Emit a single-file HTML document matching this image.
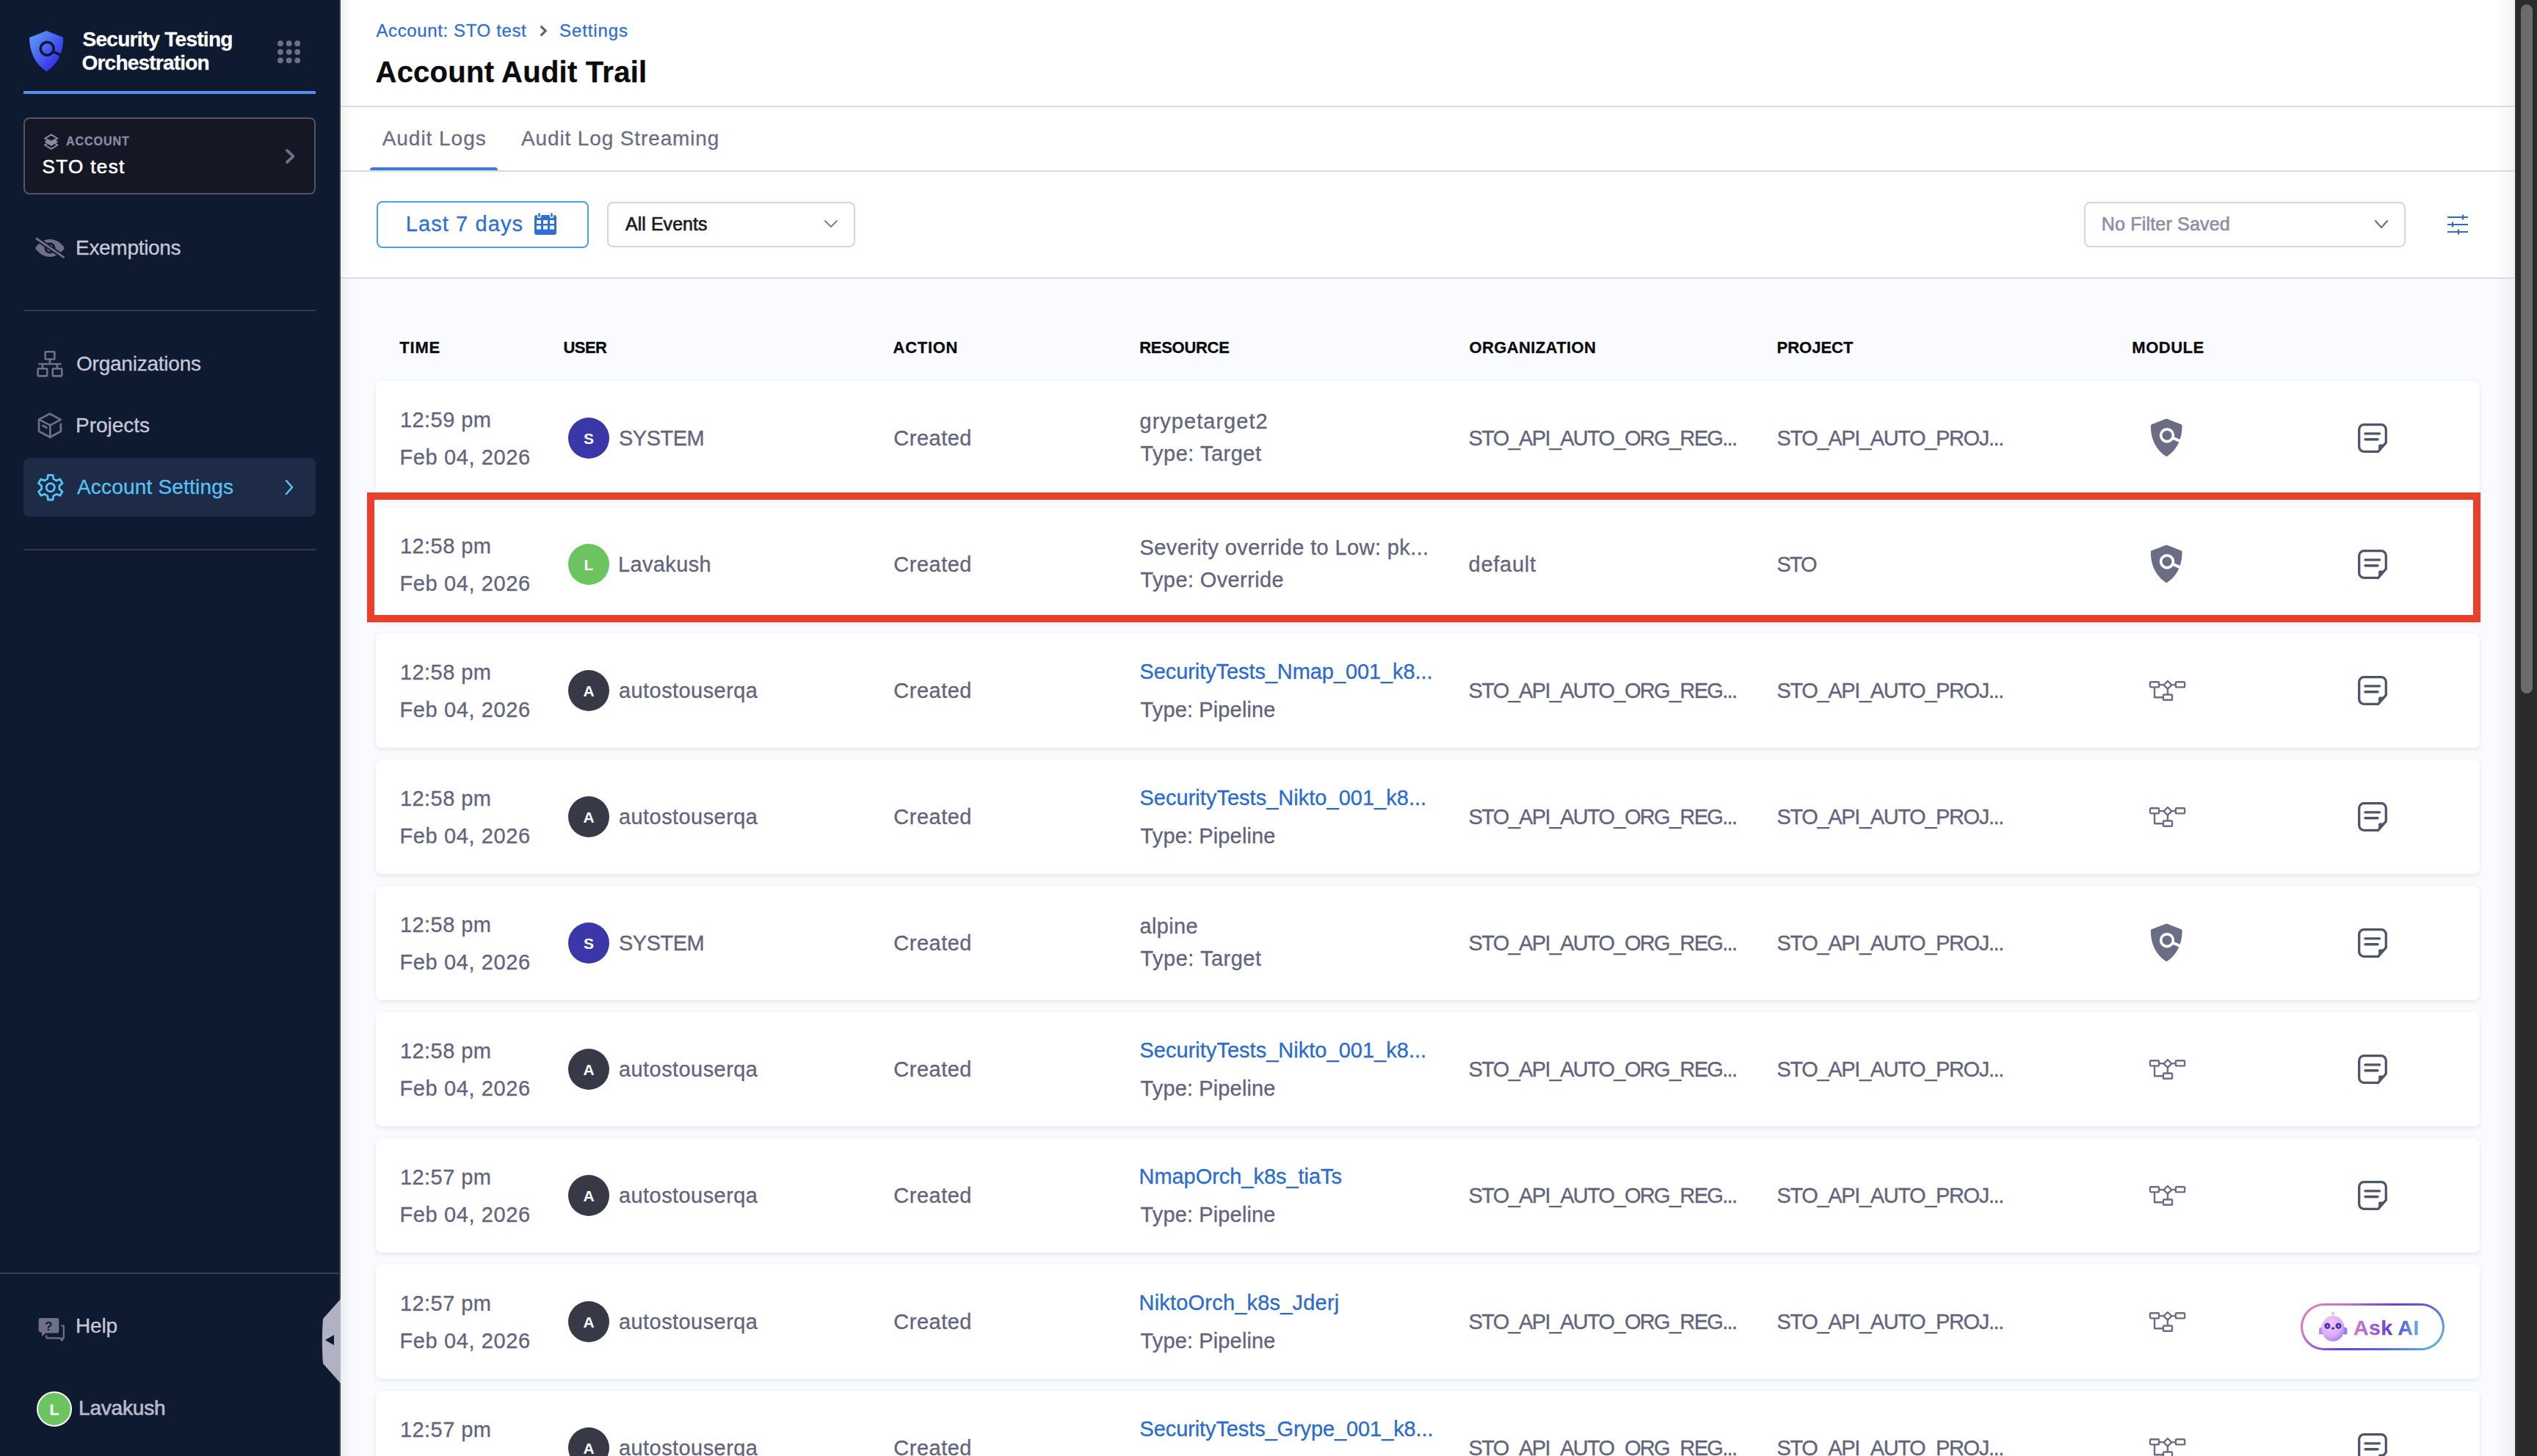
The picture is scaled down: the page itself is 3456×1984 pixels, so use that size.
<!DOCTYPE html>
<html><head><meta charset="utf-8"><title>Account Audit Trail</title>
<style>
html,body{margin:0;padding:0;}
body{width:3456px;height:1984px;overflow:hidden;position:relative;background:#fafbfd;font-family:"Liberation Sans", sans-serif;}
.t{position:absolute;white-space:nowrap;-webkit-text-stroke-width:0.3px;}
.r{position:absolute;display:block;}
.askai{border-radius:32px;border:3px solid transparent;box-sizing:border-box;
background:linear-gradient(#fff,#fff) padding-box,linear-gradient(140deg,#e27fbf 0%,#c873c6 22%,#6a3ed8 47%,#5a66dc 68%,#5fc6df 100%) border-box;}
</style></head><body>
<div class="r" style="left:0.00px;top:0.00px;width:462.00px;height:1984.00px;background:#0e1a30;"></div>
<div class="r" style="left:462.00px;top:0.00px;width:2.00px;height:1984.00px;background:#3a3d4c;"></div>
<svg class="r" style="left:39.90px;top:42.20px;" width="46.50" height="55.50" viewBox="0 0 46.5 55.5"><defs><linearGradient id="lg" x1="0" y1="0" x2="1" y2="1"><stop offset="0" stop-color="#62a4ff"/><stop offset="1" stop-color="#2a14e2"/></linearGradient></defs><path d="M23.3 0 L46.3 9.2 C46.5 29 39 45 23.3 55.5 C7.6 45 0.2 29 0 9.2 Z" fill="url(#lg)"/><circle cx="24.2" cy="24.3" r="8.9" fill="none" stroke="#0e1a30" stroke-width="3.5"/><path d="M32.5 28.3 L47 35" stroke="#0e1a30" stroke-width="3.5"/></svg>
<div class="t" style="left:112.50px;top:39.80px;font-size:28px;line-height:28px;color:#ffffff;font-weight:700;letter-spacing:-0.723px;">Security Testing</div>
<div class="t" style="left:111.50px;top:72.10px;font-size:28px;line-height:28px;color:#ffffff;font-weight:700;letter-spacing:-0.791px;">Orchestration</div>
<svg class="r" style="left:374.00px;top:51.00px;" width="40.00" height="40.00" viewBox="0 0 40 40"><g fill="#6e7089"><circle cx="8.00" cy="8.20" r="3.9"/><circle cx="19.70" cy="8.20" r="3.9"/><circle cx="31.20" cy="8.20" r="3.9"/><circle cx="8.00" cy="19.80" r="3.9"/><circle cx="19.70" cy="19.80" r="3.9"/><circle cx="31.20" cy="19.80" r="3.9"/><circle cx="8.00" cy="31.30" r="3.9"/><circle cx="19.70" cy="31.30" r="3.9"/><circle cx="31.20" cy="31.30" r="3.9"/></g></svg>
<div class="r" style="left:32.00px;top:124.00px;width:398.00px;height:4.00px;background:#5a8ff0;"></div>
<div class="r" style="left:32.00px;top:160.00px;width:398.00px;height:105.00px;background:#151824;border:2px solid #555464;border-radius:8px;box-sizing:border-box;"></div>
<svg class="r" style="left:54.00px;top:178.00px;" width="32.00" height="32.00" viewBox="0 0 32 32"><g fill="none" stroke="#8a8ca3" stroke-width="1.9" stroke-linejoin="round"><path d="M15.8 5.4 L24.4 10.7 L15.7 14.6 L7.1 10.7 Z"/><path d="M10.2 17.9 L7 19.5 L15.7 24.9 L24.6 19.5 L21.3 17.9"/></g><path d="M6.4 15.1 L9.9 12.8 L15.7 15.6 L21.8 12.8 L25.4 15.2 L15.7 20.9 Z" fill="#8a8ca3"/></svg>
<div class="t" style="left:90.00px;top:185.46px;font-size:16px;line-height:16px;color:#8a8ca3;font-weight:700;letter-spacing:0.964px;">ACCOUNT</div>
<div class="t" style="left:57.60px;top:213.59px;font-size:26px;line-height:26px;color:#ffffff;font-weight:400;letter-spacing:1.359px;-webkit-text-stroke:0.6px #fff;">STO test</div>
<svg class="r" style="left:385.00px;top:200.00px;" width="20.00" height="26.00" viewBox="0 0 20 26"><path d="M6 5 L14.5 13 L6 21" fill="none" stroke="#6e7089" stroke-width="3.8" stroke-linecap="round" stroke-linejoin="round"/></svg>
<svg class="r" style="left:40.00px;top:310.00px;" width="60.00" height="60.00" viewBox="0 0 60 60"><path d="M8 28 C12 21.5 19.5 16 28 16 C36.5 16 44 21.5 48 28 C44 34.5 36.5 40 28 40 C19.5 40 12 34.5 8 28 Z" fill="#6e7089"/><circle cx="28" cy="28" r="6.1" fill="none" stroke="#0e1a30" stroke-width="2.8"/><path d="M9.9 15.2 L46.6 40.4" stroke="#0e1a30" stroke-width="6.6" stroke-linecap="round"/><path d="M9.9 15.2 L46.6 40.4" stroke="#6e7089" stroke-width="2.9" stroke-linecap="round"/></svg>
<div class="t" style="left:103.00px;top:323.90px;font-size:28px;line-height:28px;color:#c6c8d8;font-weight:400;letter-spacing:-0.299px;">Exemptions</div>
<div class="r" style="left:32.00px;top:422.00px;width:398.00px;height:2.00px;background:#34384a;"></div>
<svg class="r" style="left:40.00px;top:470.00px;" width="60.00" height="60.00" viewBox="0 0 60 60"><g fill="none" stroke="#6e7089" stroke-width="2.6" stroke-linejoin="round"><rect x="21.7" y="9.3" width="12.6" height="10.2" rx="0.8"/><rect x="11.6" y="32.2" width="12.6" height="10.2" rx="0.8"/><rect x="31.8" y="32.2" width="12.4" height="10.2" rx="0.8"/><path d="M28 19.5 V26 M13.2 26 H42.6 M17.9 26 V32.2 M37.9 26 V32.2" stroke-linecap="round"/></g></svg>
<div class="t" style="left:104.00px;top:482.30px;font-size:28px;line-height:28px;color:#c6c8d8;font-weight:400;letter-spacing:-0.230px;">Organizations</div>
<svg class="r" style="left:40.00px;top:555.00px;" width="60.00" height="50.00" viewBox="0 0 60 50"><g fill="none" stroke="#6e7089" stroke-width="2.7" stroke-linejoin="round" stroke-linecap="round"><path d="M13 16.6 L27.8 8.7 L42.8 16.9 L28.3 24.4 Z"/><path d="M13 16.6 V32.7 L28.3 40.8 V24.4"/><path d="M28.3 40.8 L42.8 32.7 V22.8"/><path d="M18.3 25 L23.5 27.8"/></g></svg>
<div class="t" style="left:103.00px;top:566.30px;font-size:28px;line-height:28px;color:#c6c8d8;font-weight:400;letter-spacing:-0.021px;">Projects</div>
<div class="r" style="left:32.00px;top:624.00px;width:398.00px;height:80.00px;background:#1e2b46;border-radius:8px;"></div>
<svg class="r" style="left:49.00px;top:644.00px;" width="40.00" height="40.00" viewBox="0 0 40 40"><g fill="none" stroke="#56c3f6" stroke-width="2.8" stroke-linejoin="round"><path d="M16.5 3.3 H23 L23.8 8.6 L27.8 10.9 L32.8 9 L36 14.5 L31.9 17.9 V22.5 L36 25.8 L32.8 31.3 L27.8 29.4 L23.8 31.7 L23 37 H16.5 L15.7 31.7 L11.7 29.4 L6.7 31.3 L3.5 25.8 L7.6 22.5 V17.9 L3.5 14.5 L6.7 9 L11.7 10.9 L15.7 8.6 Z"/><circle cx="19.75" cy="20.2" r="5.6"/></g></svg>
<div class="t" style="left:105.00px;top:650.30px;font-size:28px;line-height:28px;color:#56c3f6;font-weight:400;letter-spacing:0.192px;">Account Settings</div>
<svg class="r" style="left:384.00px;top:650.00px;" width="20.00" height="28.00" viewBox="0 0 20 28"><path d="M6 5 L14 14 L6 23" fill="none" stroke="#56c3f6" stroke-width="2.6" stroke-linecap="round" stroke-linejoin="round"/></svg>
<div class="r" style="left:32.00px;top:748.00px;width:398.00px;height:2.00px;background:#34384a;"></div>
<div class="r" style="left:0.00px;top:1734.00px;width:462.00px;height:2.00px;background:#3b3e4e;"></div>
<svg class="r" style="left:44.00px;top:1788.00px;" width="50.00" height="50.00" viewBox="0 0 50 50"><path d="M11 8 H33.8 A2.5 2.5 0 0 1 36.3 10.5 V26 A2.5 2.5 0 0 1 33.8 28.5 H18.5 L13 33 V28 Q9 27 8.6 25 V10.5 A2.5 2.5 0 0 1 11 8 Z" fill="#6e7089"/><text x="22.3" y="24.6" font-family="Liberation Sans" font-weight="700" font-size="17" fill="#0e1a30" text-anchor="middle">?</text><path d="M39.2 18.5 H42.8 V35.4 H41 V38.6 L37.6 35.4 H20.8 Q19.2 35.4 19.2 33.8 V31.5" fill="none" stroke="#6e7089" stroke-width="2.2" stroke-linejoin="round"/></svg>
<div class="t" style="left:103.00px;top:1793.30px;font-size:28px;line-height:28px;color:#c6c8d8;font-weight:400;letter-spacing:-0.171px;">Help</div>
<svg class="r" style="left:438.00px;top:1770.00px;" width="26.00" height="115.00" viewBox="0 0 26 115"><path d="M26 0 L26 115 L2 88 C0.5 70 0.5 45 2 27 Z" fill="#b0b2c4"/><path d="M5 56 L17 49 V63 Z" fill="#0e1a30"/></svg>
<div class="r" style="left:49.70px;top:1895.60px;width:48.20px;height:48.20px;background:#6cc461;border:2px solid #ffffff;border-radius:50%;box-sizing:border-box;"></div>
<div class="t" style="left:67.50px;top:1909.82px;font-size:21px;line-height:21px;color:#ffffff;font-weight:700;">L</div>
<div class="t" style="left:107.00px;top:1905.30px;font-size:28px;line-height:28px;color:#b8bacb;font-weight:400;letter-spacing:-0.184px;-webkit-text-stroke:0.7px #b8bacb;">Lavakush</div>
<div class="r" style="left:464.00px;top:0.00px;width:2961.00px;height:379.00px;background:#ffffff;"></div>
<div class="r" style="left:464.00px;top:379.00px;width:2962.00px;height:1605.00px;background:#fafbfe;"></div>
<div class="r" style="left:464.00px;top:0.00px;width:18.00px;height:1984.00px;background:linear-gradient(90deg,rgba(0,0,0,0.05),rgba(0,0,0,0));"></div>
<div class="r" style="left:3400.00px;top:0.00px;width:26.00px;height:1984.00px;background:linear-gradient(90deg,rgba(0,0,30,0),rgba(0,0,30,0.045));"></div>
<div class="t" style="left:512.50px;top:29.68px;font-size:24px;line-height:24px;color:#2f6fcd;font-weight:400;letter-spacing:0.616px;">Account: STO test</div>
<svg class="r" style="left:730.00px;top:34.00px;" width="18.00" height="20.00" viewBox="0 0 18 20"><path d="M6.6 1.6 L13.2 8.1 L6.6 14.6" fill="none" stroke="#596373" stroke-width="3.1" stroke-linejoin="miter"/></svg>
<div class="t" style="left:762.00px;top:29.68px;font-size:24px;line-height:24px;color:#2f6fcd;font-weight:400;letter-spacing:0.897px;">Settings</div>
<div class="t" style="left:511.50px;top:78.44px;font-size:40px;line-height:40px;color:#0b0b0e;font-weight:700;letter-spacing:0.246px;">Account Audit Trail</div>
<div class="r" style="left:464.00px;top:144.00px;width:2961.00px;height:2.00px;background:#d9dae5;"></div>
<div class="t" style="left:520.70px;top:175.30px;font-size:28px;line-height:28px;color:#6b6d85;font-weight:400;letter-spacing:0.965px;">Audit Logs</div>
<div class="t" style="left:710.00px;top:175.30px;font-size:28px;line-height:28px;color:#6b6d85;font-weight:400;letter-spacing:0.870px;">Audit Log Streaming</div>
<div class="r" style="left:503.80px;top:227.50px;width:174.20px;height:5.00px;background:#3b7ad9;border-radius:4px 4px 0 0;"></div>
<div class="r" style="left:464.00px;top:232.00px;width:2961.00px;height:2.00px;background:#d9dae5;"></div>
<div class="r" style="left:512.50px;top:274.00px;width:289.50px;height:63.50px;border:2px solid #45a2e3;border-radius:8px;box-sizing:border-box;background:#fff;"></div>
<div class="t" style="left:552.80px;top:291.45px;font-size:29px;line-height:29px;color:#2e6fcf;font-weight:400;letter-spacing:1.089px;">Last 7 days</div>
<svg class="r" style="left:726.00px;top:288.00px;" width="34.00" height="34.00" viewBox="0 0 34 34"><rect x="2" y="5" width="30" height="27" rx="3" fill="#2e6fcf"/><rect x="6.5" y="1.5" width="4" height="7" rx="1.5" fill="#2e6fcf" stroke="#fff" stroke-width="1.5"/><rect x="23.5" y="1.5" width="4" height="7" rx="1.5" fill="#2e6fcf" stroke="#fff" stroke-width="1.5"/><g fill="#fff"><rect x="5" y="12" width="6" height="5"/><rect x="14" y="12" width="6" height="5"/><rect x="23" y="12" width="6" height="5"/><rect x="5" y="19.5" width="6" height="5"/><rect x="14" y="19.5" width="6" height="5"/><rect x="23" y="19.5" width="6" height="5"/></g></svg>
<div class="r" style="left:826.70px;top:274.80px;width:338.70px;height:62.50px;border:2px solid #d4d5e0;border-radius:8px;box-sizing:border-box;background:#fff;"></div>
<div class="t" style="left:852.00px;top:292.84px;font-size:25px;line-height:25px;color:#1c1c24;font-weight:400;letter-spacing:0.038px;-webkit-text-stroke:0.7px #1c1c24;">All Events</div>
<svg class="r" style="left:1120.00px;top:296.00px;" width="24.00" height="18.00" viewBox="0 0 24 18"><path d="M4 5 L12 13 L20 5" fill="none" stroke="#7c7e95" stroke-width="2" stroke-linecap="round" stroke-linejoin="round"/></svg>
<div class="r" style="left:2838.60px;top:274.70px;width:438.40px;height:62.00px;border:2px solid #d4d5e0;border-radius:8px;box-sizing:border-box;background:#fff;"></div>
<div class="t" style="left:2862.80px;top:293.24px;font-size:25px;line-height:25px;color:#8f90a6;font-weight:400;letter-spacing:0.187px;-webkit-text-stroke:0.7px #8f90a6;">No Filter Saved</div>
<svg class="r" style="left:3232.00px;top:296.00px;" width="24.00" height="20.00" viewBox="0 0 24 20"><path d="M4 5 L12 14 L20 5" fill="none" stroke="#6f7189" stroke-width="2.2" stroke-linecap="round" stroke-linejoin="round"/></svg>
<svg class="r" style="left:3332.00px;top:290.00px;" width="32.00" height="32.00" viewBox="0 0 32 32"><g stroke="#2d6bcc" stroke-width="2.2"><path d="M2 6 H30 M2 16 H30 M2 26 H30"/><path d="M23 2.5 V9.5 M9 12.5 V19.5 M17 22.5 V29.5"/></g></svg>
<div class="r" style="left:464.00px;top:378.00px;width:2961.00px;height:2.00px;background:#d9dae5;"></div>
<div class="t" style="left:544.30px;top:462.58px;font-size:22px;line-height:22px;color:#0b0b0e;font-weight:700;letter-spacing:0.808px;">TIME</div>
<div class="t" style="left:767.50px;top:462.58px;font-size:22px;line-height:22px;color:#0b0b0e;font-weight:700;letter-spacing:-0.578px;">USER</div>
<div class="t" style="left:1216.60px;top:462.58px;font-size:22px;line-height:22px;color:#0b0b0e;font-weight:700;letter-spacing:0.712px;">ACTION</div>
<div class="t" style="left:1552.20px;top:462.58px;font-size:22px;line-height:22px;color:#0b0b0e;font-weight:700;letter-spacing:-0.287px;">RESOURCE</div>
<div class="t" style="left:2001.40px;top:462.58px;font-size:22px;line-height:22px;color:#0b0b0e;font-weight:700;letter-spacing:0.386px;">ORGANIZATION</div>
<div class="t" style="left:2420.50px;top:462.58px;font-size:22px;line-height:22px;color:#0b0b0e;font-weight:700;letter-spacing:0.005px;">PROJECT</div>
<div class="t" style="left:2904.30px;top:462.58px;font-size:22px;line-height:22px;color:#0b0b0e;font-weight:700;letter-spacing:0.510px;">MODULE</div>
<div class="r" style="left:512.00px;top:519.00px;width:2866.00px;height:156.00px;background:#fff;border-radius:8px;box-shadow:0 0 2px rgba(40,41,61,0.06),0 3px 6px rgba(96,97,112,0.10);"></div>
<div class="t" style="left:545.00px;top:557.55px;font-size:29px;line-height:29px;color:#62647b;font-weight:400;letter-spacing:0.421px;">12:59 pm</div>
<div class="t" style="left:544.50px;top:608.95px;font-size:29px;line-height:29px;color:#62647b;font-weight:400;letter-spacing:0.620px;">Feb 04, 2026</div>
<div class="r" style="left:774.00px;top:569.00px;width:56.00px;height:56.00px;background:#3a37a8;border-radius:50%;"></div>
<div class="t" style="left:793.50px;top:587.42px;font-size:21px;line-height:21px;color:#ffffff;font-weight:700;width:17px;text-align:center;-webkit-text-stroke-width:0;">S</div>
<div class="t" style="left:843.00px;top:583.45px;font-size:29px;line-height:29px;color:#62647b;font-weight:400;letter-spacing:-0.497px;">SYSTEM</div>
<div class="t" style="left:1217.30px;top:583.15px;font-size:29px;line-height:29px;color:#62647b;font-weight:400;letter-spacing:0.493px;">Created</div>
<div class="t" style="left:1552.50px;top:560.15px;font-size:29px;line-height:29px;color:#62647b;font-weight:400;letter-spacing:1.027px;">grypetarget2</div>
<div class="t" style="left:1553.50px;top:603.65px;font-size:29px;line-height:29px;color:#62647b;font-weight:400;letter-spacing:0.497px;">Type: Target</div>
<div class="t" style="left:2000.60px;top:582.65px;font-size:29px;line-height:29px;color:#62647b;font-weight:400;letter-spacing:-1.686px;">STO_API_AUTO_ORG_REG...</div>
<div class="t" style="left:2420.50px;top:582.65px;font-size:29px;line-height:29px;color:#62647b;font-weight:400;letter-spacing:-1.364px;">STO_API_AUTO_PROJ...</div>
<svg class="r" style="left:2929.00px;top:569.50px;" width="44.00" height="52.50" viewBox="0 0 44 52.5"><path d="M21 0.9 Q22.3 0.2 23.6 0.9 L42.3 8.2 Q43.6 8.8 43.6 10.2 C43.5 28 37 43 22.3 52.3 C7.5 43 0.8 28 0.8 10.2 Q0.8 8.8 2.1 8.2 Z" fill="#6b6d85"/><circle cx="23" cy="23.2" r="8.35" fill="none" stroke="#fff" stroke-width="3.7"/><path d="M30.6 26.6 L46 33.2" stroke="#fff" stroke-width="3.9"/></svg>
<svg class="r" style="left:3212.10px;top:576.90px;" width="40.00" height="40.00" viewBox="0 0 40 40"><path d="M1.7 8.2 A6.5 6.5 0 0 1 8.2 1.7 H31.8 A6.5 6.5 0 0 1 38.3 8.2 V26.2 L27.6 38.3 H8.2 A6.5 6.5 0 0 1 1.7 31.8 Z" fill="none" stroke="#4f5568" stroke-width="3.3" stroke-linejoin="round"/><path d="M10 13.9 H29.5 M10 21.8 H27" stroke="#4f5568" stroke-width="3.4" stroke-linecap="round"/><path d="M28.1 30.2 Q28.1 28.4 29.9 28.4 H37.6 L28.1 38 Z" fill="#4f5568"/></svg>
<div class="r" style="left:512.00px;top:691.00px;width:2866.00px;height:156.00px;background:#fff;border-radius:8px;box-shadow:0 0 2px rgba(40,41,61,0.06),0 3px 6px rgba(96,97,112,0.10);"></div>
<div class="t" style="left:545.00px;top:729.55px;font-size:29px;line-height:29px;color:#62647b;font-weight:400;letter-spacing:0.421px;">12:58 pm</div>
<div class="t" style="left:544.50px;top:780.95px;font-size:29px;line-height:29px;color:#62647b;font-weight:400;letter-spacing:0.620px;">Feb 04, 2026</div>
<div class="r" style="left:774.00px;top:741.00px;width:56.00px;height:56.00px;background:#6cc461;border-radius:50%;"></div>
<div class="t" style="left:793.50px;top:759.42px;font-size:21px;line-height:21px;color:#ffffff;font-weight:700;width:17px;text-align:center;-webkit-text-stroke-width:0;">L</div>
<div class="t" style="left:842.00px;top:755.45px;font-size:29px;line-height:29px;color:#62647b;font-weight:400;letter-spacing:0.355px;">Lavakush</div>
<div class="t" style="left:1217.30px;top:755.15px;font-size:29px;line-height:29px;color:#62647b;font-weight:400;letter-spacing:0.493px;">Created</div>
<div class="t" style="left:1552.50px;top:732.15px;font-size:29px;line-height:29px;color:#62647b;font-weight:400;letter-spacing:0.389px;">Severity override to Low: pk...</div>
<div class="t" style="left:1553.50px;top:775.65px;font-size:29px;line-height:29px;color:#62647b;font-weight:400;letter-spacing:0.380px;">Type: Override</div>
<div class="t" style="left:2000.60px;top:754.65px;font-size:29px;line-height:29px;color:#62647b;font-weight:400;letter-spacing:0.731px;">default</div>
<div class="t" style="left:2420.50px;top:754.65px;font-size:29px;line-height:29px;color:#62647b;font-weight:400;letter-spacing:-2.067px;">STO</div>
<svg class="r" style="left:2929.00px;top:741.50px;" width="44.00" height="52.50" viewBox="0 0 44 52.5"><path d="M21 0.9 Q22.3 0.2 23.6 0.9 L42.3 8.2 Q43.6 8.8 43.6 10.2 C43.5 28 37 43 22.3 52.3 C7.5 43 0.8 28 0.8 10.2 Q0.8 8.8 2.1 8.2 Z" fill="#6b6d85"/><circle cx="23" cy="23.2" r="8.35" fill="none" stroke="#fff" stroke-width="3.7"/><path d="M30.6 26.6 L46 33.2" stroke="#fff" stroke-width="3.9"/></svg>
<svg class="r" style="left:3212.10px;top:748.90px;" width="40.00" height="40.00" viewBox="0 0 40 40"><path d="M1.7 8.2 A6.5 6.5 0 0 1 8.2 1.7 H31.8 A6.5 6.5 0 0 1 38.3 8.2 V26.2 L27.6 38.3 H8.2 A6.5 6.5 0 0 1 1.7 31.8 Z" fill="none" stroke="#4f5568" stroke-width="3.3" stroke-linejoin="round"/><path d="M10 13.9 H29.5 M10 21.8 H27" stroke="#4f5568" stroke-width="3.4" stroke-linecap="round"/><path d="M28.1 30.2 Q28.1 28.4 29.9 28.4 H37.6 L28.1 38 Z" fill="#4f5568"/></svg>
<div class="r" style="left:512.00px;top:863.00px;width:2866.00px;height:156.00px;background:#fff;border-radius:8px;box-shadow:0 0 2px rgba(40,41,61,0.06),0 3px 6px rgba(96,97,112,0.10);"></div>
<div class="t" style="left:545.00px;top:901.55px;font-size:29px;line-height:29px;color:#62647b;font-weight:400;letter-spacing:0.421px;">12:58 pm</div>
<div class="t" style="left:544.50px;top:952.95px;font-size:29px;line-height:29px;color:#62647b;font-weight:400;letter-spacing:0.620px;">Feb 04, 2026</div>
<div class="r" style="left:774.00px;top:913.00px;width:56.00px;height:56.00px;background:#383946;border-radius:50%;"></div>
<div class="t" style="left:793.50px;top:931.42px;font-size:21px;line-height:21px;color:#ffffff;font-weight:700;width:17px;text-align:center;-webkit-text-stroke-width:0;">A</div>
<div class="t" style="left:843.00px;top:927.45px;font-size:29px;line-height:29px;color:#62647b;font-weight:400;letter-spacing:0.427px;">autostouserqa</div>
<div class="t" style="left:1217.30px;top:927.15px;font-size:29px;line-height:29px;color:#62647b;font-weight:400;letter-spacing:0.493px;">Created</div>
<div class="t" style="left:1552.50px;top:901.15px;font-size:29px;line-height:29px;color:#2b6bcb;font-weight:400;letter-spacing:-0.086px;">SecurityTests_Nmap_001_k8...</div>
<div class="t" style="left:1553.50px;top:952.95px;font-size:29px;line-height:29px;color:#62647b;font-weight:400;letter-spacing:0.135px;">Type: Pipeline</div>
<div class="t" style="left:2000.60px;top:926.65px;font-size:29px;line-height:29px;color:#62647b;font-weight:400;letter-spacing:-1.686px;">STO_API_AUTO_ORG_REG...</div>
<div class="t" style="left:2420.50px;top:926.65px;font-size:29px;line-height:29px;color:#62647b;font-weight:400;letter-spacing:-1.364px;">STO_API_AUTO_PROJ...</div>
<svg class="r" style="left:2926.50px;top:926.80px;" width="51.00" height="28.00" viewBox="0 0 51 28"><g fill="none" stroke="#6b6d85" stroke-width="2.4" stroke-linejoin="round"><rect x="1.9" y="2.3" width="12.1" height="7.1" rx="1.4"/><rect x="36.8" y="2.3" width="12.3" height="7.1" rx="1.4"/><rect x="19.9" y="19.5" width="12.1" height="7.3" rx="1.4"/><path d="M25.9 1 L31.3 6.3 L25.9 11.7 L20.5 6.3 Z"/><path d="M14 6.1 H20.5 M31.3 6.1 H36.8 M25.9 11.7 V19.5 M8 9.4 V23.2 H19.9"/></g></svg>
<svg class="r" style="left:3212.10px;top:920.90px;" width="40.00" height="40.00" viewBox="0 0 40 40"><path d="M1.7 8.2 A6.5 6.5 0 0 1 8.2 1.7 H31.8 A6.5 6.5 0 0 1 38.3 8.2 V26.2 L27.6 38.3 H8.2 A6.5 6.5 0 0 1 1.7 31.8 Z" fill="none" stroke="#4f5568" stroke-width="3.3" stroke-linejoin="round"/><path d="M10 13.9 H29.5 M10 21.8 H27" stroke="#4f5568" stroke-width="3.4" stroke-linecap="round"/><path d="M28.1 30.2 Q28.1 28.4 29.9 28.4 H37.6 L28.1 38 Z" fill="#4f5568"/></svg>
<div class="r" style="left:512.00px;top:1035.00px;width:2866.00px;height:156.00px;background:#fff;border-radius:8px;box-shadow:0 0 2px rgba(40,41,61,0.06),0 3px 6px rgba(96,97,112,0.10);"></div>
<div class="t" style="left:545.00px;top:1073.55px;font-size:29px;line-height:29px;color:#62647b;font-weight:400;letter-spacing:0.421px;">12:58 pm</div>
<div class="t" style="left:544.50px;top:1124.95px;font-size:29px;line-height:29px;color:#62647b;font-weight:400;letter-spacing:0.620px;">Feb 04, 2026</div>
<div class="r" style="left:774.00px;top:1085.00px;width:56.00px;height:56.00px;background:#383946;border-radius:50%;"></div>
<div class="t" style="left:793.50px;top:1103.42px;font-size:21px;line-height:21px;color:#ffffff;font-weight:700;width:17px;text-align:center;-webkit-text-stroke-width:0;">A</div>
<div class="t" style="left:843.00px;top:1099.45px;font-size:29px;line-height:29px;color:#62647b;font-weight:400;letter-spacing:0.427px;">autostouserqa</div>
<div class="t" style="left:1217.30px;top:1099.15px;font-size:29px;line-height:29px;color:#62647b;font-weight:400;letter-spacing:0.493px;">Created</div>
<div class="t" style="left:1552.50px;top:1073.15px;font-size:29px;line-height:29px;color:#2b6bcb;font-weight:400;letter-spacing:0.020px;">SecurityTests_Nikto_001_k8...</div>
<div class="t" style="left:1553.50px;top:1124.95px;font-size:29px;line-height:29px;color:#62647b;font-weight:400;letter-spacing:0.135px;">Type: Pipeline</div>
<div class="t" style="left:2000.60px;top:1098.65px;font-size:29px;line-height:29px;color:#62647b;font-weight:400;letter-spacing:-1.686px;">STO_API_AUTO_ORG_REG...</div>
<div class="t" style="left:2420.50px;top:1098.65px;font-size:29px;line-height:29px;color:#62647b;font-weight:400;letter-spacing:-1.364px;">STO_API_AUTO_PROJ...</div>
<svg class="r" style="left:2926.50px;top:1098.80px;" width="51.00" height="28.00" viewBox="0 0 51 28"><g fill="none" stroke="#6b6d85" stroke-width="2.4" stroke-linejoin="round"><rect x="1.9" y="2.3" width="12.1" height="7.1" rx="1.4"/><rect x="36.8" y="2.3" width="12.3" height="7.1" rx="1.4"/><rect x="19.9" y="19.5" width="12.1" height="7.3" rx="1.4"/><path d="M25.9 1 L31.3 6.3 L25.9 11.7 L20.5 6.3 Z"/><path d="M14 6.1 H20.5 M31.3 6.1 H36.8 M25.9 11.7 V19.5 M8 9.4 V23.2 H19.9"/></g></svg>
<svg class="r" style="left:3212.10px;top:1092.90px;" width="40.00" height="40.00" viewBox="0 0 40 40"><path d="M1.7 8.2 A6.5 6.5 0 0 1 8.2 1.7 H31.8 A6.5 6.5 0 0 1 38.3 8.2 V26.2 L27.6 38.3 H8.2 A6.5 6.5 0 0 1 1.7 31.8 Z" fill="none" stroke="#4f5568" stroke-width="3.3" stroke-linejoin="round"/><path d="M10 13.9 H29.5 M10 21.8 H27" stroke="#4f5568" stroke-width="3.4" stroke-linecap="round"/><path d="M28.1 30.2 Q28.1 28.4 29.9 28.4 H37.6 L28.1 38 Z" fill="#4f5568"/></svg>
<div class="r" style="left:512.00px;top:1207.00px;width:2866.00px;height:156.00px;background:#fff;border-radius:8px;box-shadow:0 0 2px rgba(40,41,61,0.06),0 3px 6px rgba(96,97,112,0.10);"></div>
<div class="t" style="left:545.00px;top:1245.55px;font-size:29px;line-height:29px;color:#62647b;font-weight:400;letter-spacing:0.421px;">12:58 pm</div>
<div class="t" style="left:544.50px;top:1296.95px;font-size:29px;line-height:29px;color:#62647b;font-weight:400;letter-spacing:0.620px;">Feb 04, 2026</div>
<div class="r" style="left:774.00px;top:1257.00px;width:56.00px;height:56.00px;background:#3a37a8;border-radius:50%;"></div>
<div class="t" style="left:793.50px;top:1275.42px;font-size:21px;line-height:21px;color:#ffffff;font-weight:700;width:17px;text-align:center;-webkit-text-stroke-width:0;">S</div>
<div class="t" style="left:843.00px;top:1271.45px;font-size:29px;line-height:29px;color:#62647b;font-weight:400;letter-spacing:-0.497px;">SYSTEM</div>
<div class="t" style="left:1217.30px;top:1271.15px;font-size:29px;line-height:29px;color:#62647b;font-weight:400;letter-spacing:0.493px;">Created</div>
<div class="t" style="left:1552.50px;top:1248.15px;font-size:29px;line-height:29px;color:#62647b;font-weight:400;letter-spacing:0.346px;">alpine</div>
<div class="t" style="left:1553.50px;top:1291.65px;font-size:29px;line-height:29px;color:#62647b;font-weight:400;letter-spacing:0.497px;">Type: Target</div>
<div class="t" style="left:2000.60px;top:1270.65px;font-size:29px;line-height:29px;color:#62647b;font-weight:400;letter-spacing:-1.686px;">STO_API_AUTO_ORG_REG...</div>
<div class="t" style="left:2420.50px;top:1270.65px;font-size:29px;line-height:29px;color:#62647b;font-weight:400;letter-spacing:-1.364px;">STO_API_AUTO_PROJ...</div>
<svg class="r" style="left:2929.00px;top:1257.50px;" width="44.00" height="52.50" viewBox="0 0 44 52.5"><path d="M21 0.9 Q22.3 0.2 23.6 0.9 L42.3 8.2 Q43.6 8.8 43.6 10.2 C43.5 28 37 43 22.3 52.3 C7.5 43 0.8 28 0.8 10.2 Q0.8 8.8 2.1 8.2 Z" fill="#6b6d85"/><circle cx="23" cy="23.2" r="8.35" fill="none" stroke="#fff" stroke-width="3.7"/><path d="M30.6 26.6 L46 33.2" stroke="#fff" stroke-width="3.9"/></svg>
<svg class="r" style="left:3212.10px;top:1264.90px;" width="40.00" height="40.00" viewBox="0 0 40 40"><path d="M1.7 8.2 A6.5 6.5 0 0 1 8.2 1.7 H31.8 A6.5 6.5 0 0 1 38.3 8.2 V26.2 L27.6 38.3 H8.2 A6.5 6.5 0 0 1 1.7 31.8 Z" fill="none" stroke="#4f5568" stroke-width="3.3" stroke-linejoin="round"/><path d="M10 13.9 H29.5 M10 21.8 H27" stroke="#4f5568" stroke-width="3.4" stroke-linecap="round"/><path d="M28.1 30.2 Q28.1 28.4 29.9 28.4 H37.6 L28.1 38 Z" fill="#4f5568"/></svg>
<div class="r" style="left:512.00px;top:1379.00px;width:2866.00px;height:156.00px;background:#fff;border-radius:8px;box-shadow:0 0 2px rgba(40,41,61,0.06),0 3px 6px rgba(96,97,112,0.10);"></div>
<div class="t" style="left:545.00px;top:1417.55px;font-size:29px;line-height:29px;color:#62647b;font-weight:400;letter-spacing:0.421px;">12:58 pm</div>
<div class="t" style="left:544.50px;top:1468.95px;font-size:29px;line-height:29px;color:#62647b;font-weight:400;letter-spacing:0.620px;">Feb 04, 2026</div>
<div class="r" style="left:774.00px;top:1429.00px;width:56.00px;height:56.00px;background:#383946;border-radius:50%;"></div>
<div class="t" style="left:793.50px;top:1447.42px;font-size:21px;line-height:21px;color:#ffffff;font-weight:700;width:17px;text-align:center;-webkit-text-stroke-width:0;">A</div>
<div class="t" style="left:843.00px;top:1443.45px;font-size:29px;line-height:29px;color:#62647b;font-weight:400;letter-spacing:0.427px;">autostouserqa</div>
<div class="t" style="left:1217.30px;top:1443.15px;font-size:29px;line-height:29px;color:#62647b;font-weight:400;letter-spacing:0.493px;">Created</div>
<div class="t" style="left:1552.50px;top:1417.15px;font-size:29px;line-height:29px;color:#2b6bcb;font-weight:400;letter-spacing:0.020px;">SecurityTests_Nikto_001_k8...</div>
<div class="t" style="left:1553.50px;top:1468.95px;font-size:29px;line-height:29px;color:#62647b;font-weight:400;letter-spacing:0.135px;">Type: Pipeline</div>
<div class="t" style="left:2000.60px;top:1442.65px;font-size:29px;line-height:29px;color:#62647b;font-weight:400;letter-spacing:-1.686px;">STO_API_AUTO_ORG_REG...</div>
<div class="t" style="left:2420.50px;top:1442.65px;font-size:29px;line-height:29px;color:#62647b;font-weight:400;letter-spacing:-1.364px;">STO_API_AUTO_PROJ...</div>
<svg class="r" style="left:2926.50px;top:1442.80px;" width="51.00" height="28.00" viewBox="0 0 51 28"><g fill="none" stroke="#6b6d85" stroke-width="2.4" stroke-linejoin="round"><rect x="1.9" y="2.3" width="12.1" height="7.1" rx="1.4"/><rect x="36.8" y="2.3" width="12.3" height="7.1" rx="1.4"/><rect x="19.9" y="19.5" width="12.1" height="7.3" rx="1.4"/><path d="M25.9 1 L31.3 6.3 L25.9 11.7 L20.5 6.3 Z"/><path d="M14 6.1 H20.5 M31.3 6.1 H36.8 M25.9 11.7 V19.5 M8 9.4 V23.2 H19.9"/></g></svg>
<svg class="r" style="left:3212.10px;top:1436.90px;" width="40.00" height="40.00" viewBox="0 0 40 40"><path d="M1.7 8.2 A6.5 6.5 0 0 1 8.2 1.7 H31.8 A6.5 6.5 0 0 1 38.3 8.2 V26.2 L27.6 38.3 H8.2 A6.5 6.5 0 0 1 1.7 31.8 Z" fill="none" stroke="#4f5568" stroke-width="3.3" stroke-linejoin="round"/><path d="M10 13.9 H29.5 M10 21.8 H27" stroke="#4f5568" stroke-width="3.4" stroke-linecap="round"/><path d="M28.1 30.2 Q28.1 28.4 29.9 28.4 H37.6 L28.1 38 Z" fill="#4f5568"/></svg>
<div class="r" style="left:512.00px;top:1551.00px;width:2866.00px;height:156.00px;background:#fff;border-radius:8px;box-shadow:0 0 2px rgba(40,41,61,0.06),0 3px 6px rgba(96,97,112,0.10);"></div>
<div class="t" style="left:545.00px;top:1589.55px;font-size:29px;line-height:29px;color:#62647b;font-weight:400;letter-spacing:0.421px;">12:57 pm</div>
<div class="t" style="left:544.50px;top:1640.95px;font-size:29px;line-height:29px;color:#62647b;font-weight:400;letter-spacing:0.620px;">Feb 04, 2026</div>
<div class="r" style="left:774.00px;top:1601.00px;width:56.00px;height:56.00px;background:#383946;border-radius:50%;"></div>
<div class="t" style="left:793.50px;top:1619.42px;font-size:21px;line-height:21px;color:#ffffff;font-weight:700;width:17px;text-align:center;-webkit-text-stroke-width:0;">A</div>
<div class="t" style="left:843.00px;top:1615.45px;font-size:29px;line-height:29px;color:#62647b;font-weight:400;letter-spacing:0.427px;">autostouserqa</div>
<div class="t" style="left:1217.30px;top:1615.15px;font-size:29px;line-height:29px;color:#62647b;font-weight:400;letter-spacing:0.493px;">Created</div>
<div class="t" style="left:1551.50px;top:1589.15px;font-size:29px;line-height:29px;color:#2b6bcb;font-weight:400;letter-spacing:-0.042px;">NmapOrch_k8s_tiaTs</div>
<div class="t" style="left:1553.50px;top:1640.95px;font-size:29px;line-height:29px;color:#62647b;font-weight:400;letter-spacing:0.135px;">Type: Pipeline</div>
<div class="t" style="left:2000.60px;top:1614.65px;font-size:29px;line-height:29px;color:#62647b;font-weight:400;letter-spacing:-1.686px;">STO_API_AUTO_ORG_REG...</div>
<div class="t" style="left:2420.50px;top:1614.65px;font-size:29px;line-height:29px;color:#62647b;font-weight:400;letter-spacing:-1.364px;">STO_API_AUTO_PROJ...</div>
<svg class="r" style="left:2926.50px;top:1614.80px;" width="51.00" height="28.00" viewBox="0 0 51 28"><g fill="none" stroke="#6b6d85" stroke-width="2.4" stroke-linejoin="round"><rect x="1.9" y="2.3" width="12.1" height="7.1" rx="1.4"/><rect x="36.8" y="2.3" width="12.3" height="7.1" rx="1.4"/><rect x="19.9" y="19.5" width="12.1" height="7.3" rx="1.4"/><path d="M25.9 1 L31.3 6.3 L25.9 11.7 L20.5 6.3 Z"/><path d="M14 6.1 H20.5 M31.3 6.1 H36.8 M25.9 11.7 V19.5 M8 9.4 V23.2 H19.9"/></g></svg>
<svg class="r" style="left:3212.10px;top:1608.90px;" width="40.00" height="40.00" viewBox="0 0 40 40"><path d="M1.7 8.2 A6.5 6.5 0 0 1 8.2 1.7 H31.8 A6.5 6.5 0 0 1 38.3 8.2 V26.2 L27.6 38.3 H8.2 A6.5 6.5 0 0 1 1.7 31.8 Z" fill="none" stroke="#4f5568" stroke-width="3.3" stroke-linejoin="round"/><path d="M10 13.9 H29.5 M10 21.8 H27" stroke="#4f5568" stroke-width="3.4" stroke-linecap="round"/><path d="M28.1 30.2 Q28.1 28.4 29.9 28.4 H37.6 L28.1 38 Z" fill="#4f5568"/></svg>
<div class="r" style="left:512.00px;top:1723.00px;width:2866.00px;height:156.00px;background:#fff;border-radius:8px;box-shadow:0 0 2px rgba(40,41,61,0.06),0 3px 6px rgba(96,97,112,0.10);"></div>
<div class="t" style="left:545.00px;top:1761.55px;font-size:29px;line-height:29px;color:#62647b;font-weight:400;letter-spacing:0.421px;">12:57 pm</div>
<div class="t" style="left:544.50px;top:1812.95px;font-size:29px;line-height:29px;color:#62647b;font-weight:400;letter-spacing:0.620px;">Feb 04, 2026</div>
<div class="r" style="left:774.00px;top:1773.00px;width:56.00px;height:56.00px;background:#383946;border-radius:50%;"></div>
<div class="t" style="left:793.50px;top:1791.42px;font-size:21px;line-height:21px;color:#ffffff;font-weight:700;width:17px;text-align:center;-webkit-text-stroke-width:0;">A</div>
<div class="t" style="left:843.00px;top:1787.45px;font-size:29px;line-height:29px;color:#62647b;font-weight:400;letter-spacing:0.427px;">autostouserqa</div>
<div class="t" style="left:1217.30px;top:1787.15px;font-size:29px;line-height:29px;color:#62647b;font-weight:400;letter-spacing:0.493px;">Created</div>
<div class="t" style="left:1551.50px;top:1761.15px;font-size:29px;line-height:29px;color:#2b6bcb;font-weight:400;letter-spacing:0.199px;">NiktoOrch_k8s_Jderj</div>
<div class="t" style="left:1553.50px;top:1812.95px;font-size:29px;line-height:29px;color:#62647b;font-weight:400;letter-spacing:0.135px;">Type: Pipeline</div>
<div class="t" style="left:2000.60px;top:1786.65px;font-size:29px;line-height:29px;color:#62647b;font-weight:400;letter-spacing:-1.686px;">STO_API_AUTO_ORG_REG...</div>
<div class="t" style="left:2420.50px;top:1786.65px;font-size:29px;line-height:29px;color:#62647b;font-weight:400;letter-spacing:-1.364px;">STO_API_AUTO_PROJ...</div>
<svg class="r" style="left:2926.50px;top:1786.80px;" width="51.00" height="28.00" viewBox="0 0 51 28"><g fill="none" stroke="#6b6d85" stroke-width="2.4" stroke-linejoin="round"><rect x="1.9" y="2.3" width="12.1" height="7.1" rx="1.4"/><rect x="36.8" y="2.3" width="12.3" height="7.1" rx="1.4"/><rect x="19.9" y="19.5" width="12.1" height="7.3" rx="1.4"/><path d="M25.9 1 L31.3 6.3 L25.9 11.7 L20.5 6.3 Z"/><path d="M14 6.1 H20.5 M31.3 6.1 H36.8 M25.9 11.7 V19.5 M8 9.4 V23.2 H19.9"/></g></svg>
<div class="r askai" style="left:3134px;top:1776px;width:195.5px;height:63.6px;"></div>
<svg class="r" style="left:3156.00px;top:1785.00px;" width="46.00" height="46.00" viewBox="0 0 46 46"><defs><radialGradient id="bg" cx="0.38" cy="0.3" r="0.8"><stop offset="0" stop-color="#f5cafc"/><stop offset="0.62" stop-color="#dcabf8"/><stop offset="1" stop-color="#9676f4"/></radialGradient></defs><circle cx="22.2" cy="4.8" r="2" fill="#e6b4f7"/><path d="M22.2 5 V9" stroke="#e6b4f7" stroke-width="1.4"/><path d="M3.2 25 Q5 23.4 8 23.6 L8.6 33 L3 33.4 Z" fill="#b58cf6"/><path d="M41.2 25 Q39.4 23.4 36.4 23.6 L35.8 33 L41.4 33.4 Z" fill="#9a78f4"/><ellipse cx="22.1" cy="25.4" rx="15.6" ry="17.4" fill="url(#bg)"/><circle cx="14.4" cy="21.8" r="4.9" fill="#f3dcff"/><circle cx="29.6" cy="21.8" r="4.9" fill="#f3dcff"/><circle cx="14.4" cy="21.8" r="4.2" fill="#5535c6"/><circle cx="29.6" cy="21.8" r="4.2" fill="#5535c6"/><circle cx="14.6" cy="22" r="0.9" fill="#fff"/><circle cx="29.8" cy="22" r="0.9" fill="#fff"/><path d="M19.2 24.1 Q22 23.4 24.9 24.1 L22.1 27.6 Z" fill="#4a2db5"/></svg>
<div class="t" style="left:3206.00px;top:1794.87px;font-size:28.5px;line-height:28.5px;color:#7a4fd6;font-weight:700;letter-spacing:0.364px;background:linear-gradient(90deg,#d27ccc 0%,#9a55d8 35%,#5d3fd6 58%,#5b6fdc 78%,#6cb3dc 100%);-webkit-background-clip:text;background-clip:text;color:transparent;">Ask AI</div>
<div class="r" style="left:512.00px;top:1895.00px;width:2866.00px;height:156.00px;background:#fff;border-radius:8px;box-shadow:0 0 2px rgba(40,41,61,0.06),0 3px 6px rgba(96,97,112,0.10);"></div>
<div class="t" style="left:545.00px;top:1933.55px;font-size:29px;line-height:29px;color:#62647b;font-weight:400;letter-spacing:0.421px;">12:57 pm</div>
<div class="t" style="left:544.50px;top:1984.95px;font-size:29px;line-height:29px;color:#62647b;font-weight:400;letter-spacing:0.620px;">Feb 04, 2026</div>
<div class="r" style="left:774.00px;top:1945.00px;width:56.00px;height:56.00px;background:#383946;border-radius:50%;"></div>
<div class="t" style="left:793.50px;top:1963.42px;font-size:21px;line-height:21px;color:#ffffff;font-weight:700;width:17px;text-align:center;-webkit-text-stroke-width:0;">A</div>
<div class="t" style="left:843.00px;top:1959.45px;font-size:29px;line-height:29px;color:#62647b;font-weight:400;letter-spacing:0.427px;">autostouserqa</div>
<div class="t" style="left:1217.30px;top:1959.15px;font-size:29px;line-height:29px;color:#62647b;font-weight:400;letter-spacing:0.493px;">Created</div>
<div class="t" style="left:1552.50px;top:1933.15px;font-size:29px;line-height:29px;color:#2b6bcb;font-weight:400;letter-spacing:-0.105px;">SecurityTests_Grype_001_k8...</div>
<div class="t" style="left:1553.50px;top:1984.95px;font-size:29px;line-height:29px;color:#62647b;font-weight:400;letter-spacing:0.135px;">Type: Pipeline</div>
<div class="t" style="left:2000.60px;top:1958.65px;font-size:29px;line-height:29px;color:#62647b;font-weight:400;letter-spacing:-1.686px;">STO_API_AUTO_ORG_REG...</div>
<div class="t" style="left:2420.50px;top:1958.65px;font-size:29px;line-height:29px;color:#62647b;font-weight:400;letter-spacing:-1.364px;">STO_API_AUTO_PROJ...</div>
<svg class="r" style="left:2926.50px;top:1958.80px;" width="51.00" height="28.00" viewBox="0 0 51 28"><g fill="none" stroke="#6b6d85" stroke-width="2.4" stroke-linejoin="round"><rect x="1.9" y="2.3" width="12.1" height="7.1" rx="1.4"/><rect x="36.8" y="2.3" width="12.3" height="7.1" rx="1.4"/><rect x="19.9" y="19.5" width="12.1" height="7.3" rx="1.4"/><path d="M25.9 1 L31.3 6.3 L25.9 11.7 L20.5 6.3 Z"/><path d="M14 6.1 H20.5 M31.3 6.1 H36.8 M25.9 11.7 V19.5 M8 9.4 V23.2 H19.9"/></g></svg>
<svg class="r" style="left:3212.10px;top:1952.90px;" width="40.00" height="40.00" viewBox="0 0 40 40"><path d="M1.7 8.2 A6.5 6.5 0 0 1 8.2 1.7 H31.8 A6.5 6.5 0 0 1 38.3 8.2 V26.2 L27.6 38.3 H8.2 A6.5 6.5 0 0 1 1.7 31.8 Z" fill="none" stroke="#4f5568" stroke-width="3.3" stroke-linejoin="round"/><path d="M10 13.9 H29.5 M10 21.8 H27" stroke="#4f5568" stroke-width="3.4" stroke-linecap="round"/><path d="M28.1 30.2 Q28.1 28.4 29.9 28.4 H37.6 L28.1 38 Z" fill="#4f5568"/></svg>
<div class="r" style="left:500.00px;top:671.00px;width:2879.00px;height:176.50px;border:10px solid #e8402a;box-sizing:border-box;"></div>
<div class="r" style="left:3426.00px;top:0.00px;width:30.00px;height:1984.00px;background:#2b2b2b;"></div>
<div class="r" style="left:3426.00px;top:0.00px;width:2.00px;height:1984.00px;background:#3a3a3a;"></div>
<div class="r" style="left:3433.50px;top:6.00px;width:16.50px;height:939.00px;background:#6b6b6b;border-radius:8px;"></div>
<script>(function(){var w=window.innerWidth;if(w&&Math.abs(w-3456)>4){document.documentElement.style.zoom=w/3456;}})();</script>
</body></html>
